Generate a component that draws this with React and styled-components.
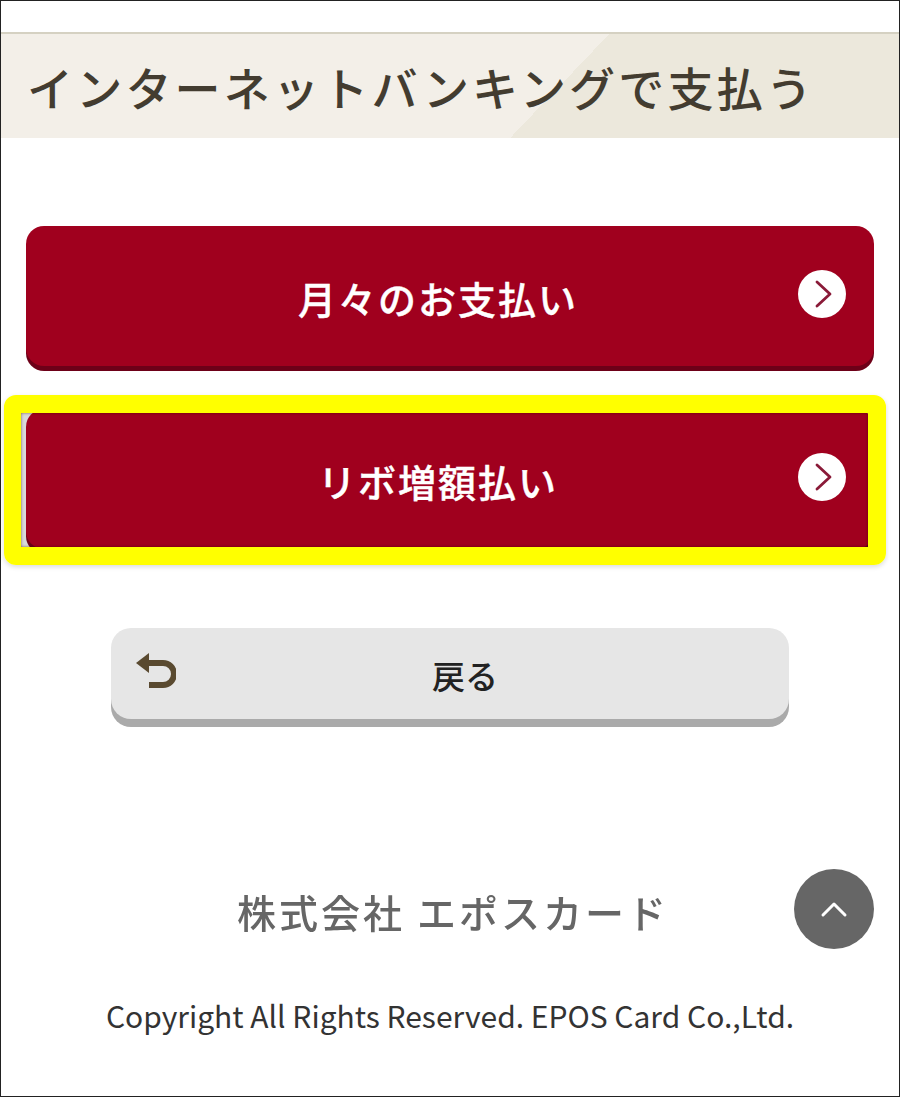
import React from "react";
import styled, { createGlobalStyle } from "styled-components";

const GlobalStyle = createGlobalStyle`
  html, body {
    margin: 0;
    padding: 0;
    background: #fff;
  }
  * {
    box-sizing: border-box;
  }
`;

function ChevronCircle() {
  return (
    <Circle>
      <svg width="24" height="30" viewBox="0 0 24 30" fill="none">
        <path d="M7 3 L20 15 L7 27" stroke="#8a1a38" strokeWidth="2.8" strokeLinecap="round" strokeLinejoin="round" />
      </svg>
    </Circle>
  );
}

function App() {
  return (
    <Frame>
      <GlobalStyle />
      <Header>
        <Title>インターネットバンキングで支払う</Title>
      </Header>
      <Main>
        <PayButton>
          <PayLabel>月々のお支払い</PayLabel>
          <ChevronCircle />
        </PayButton>
        <HighlightRow>
          <PayButton>
            <PayLabel>リボ増額払い</PayLabel>
            <ChevronCircle />
          </PayButton>
          <Highlight />
        </HighlightRow>
        <BackButton>
          <svg width="40" height="38" viewBox="0 0 40 38" fill="none">
            <path d="M0 11 L13 1 L13 21 Z" fill="#5a4a30" />
            <path d="M10 11 H27 A 11 11 0 0 1 27 33 H13" stroke="#5a4a30" strokeWidth="6" />
          </svg>
          <BackLabel>戻る</BackLabel>
        </BackButton>
      </Main>
      <Footer>
        <CompanyName>株式会社 エポスカード</CompanyName>
        <Copyright>Copyright All Rights Reserved. EPOS Card Co.,Ltd.</Copyright>
      </Footer>
      <ScrollTop>
        <svg width="30" height="20" viewBox="0 0 30 20" fill="none">
          <path d="M4 16 L15 5 L26 16" stroke="#fff" strokeWidth="3" strokeLinecap="round" strokeLinejoin="round" />
        </svg>
      </ScrollTop>
    </Frame>
  );
}

export default App;

const Frame = styled.div`
  position: relative;
  width: 900px;
  height: 1097px;
  border: 1px solid #222;
  background: #fff;
  overflow: hidden;
  font-family: "Noto Sans CJK JP", "Noto Sans", sans-serif;
`;

const Header = styled.header`
  margin-top: 31px;
  height: 106px;
  padding-left: 26px;
  display: flex;
  align-items: center;
  border-top: 2px solid #d5d1c2;
  background: linear-gradient(133.6deg, #f3efe8 61%, #ece8dc 61%);
`;

const Title = styled.h1`
  margin: 0;
  font-size: 46px;
  font-weight: 500;
  letter-spacing: 3.2px;
  line-height: 1;
  color: #433c30;
  white-space: nowrap;
`;

const Main = styled.main`
  padding: 88px 25px 0;
  display: flex;
  flex-direction: column;
  align-items: center;
`;

const PayButton = styled.button`
  position: relative;
  width: 848px;
  height: 140px;
  padding: 2px 24px 0 0;
  display: flex;
  align-items: center;
  justify-content: center;
  border: none;
  border-radius: 18px;
  background: #a0001e;
  box-shadow: 0 5px 0 #6d0018;
  font-family: inherit;
`;

const PayLabel = styled.span`
  font-size: 38px;
  font-weight: 500;
  letter-spacing: 2px;
  color: #fff;
  -webkit-text-stroke: 0.4px #fff;
`;

const Circle = styled.span`
  position: absolute;
  right: 28px;
  top: 44px;
  width: 48px;
  height: 48px;
  display: flex;
  align-items: center;
  justify-content: center;
  border-radius: 50%;
  background: #fff;
`;

const HighlightRow = styled.div`
  position: relative;
  margin-top: 43px;

  &::before {
    content: "";
    position: absolute;
    left: -5px;
    top: 4px;
    width: 12px;
    height: 135px;
    background: #d9d9d9;
  }
`;

const Highlight = styled.div`
  position: absolute;
  left: -22px;
  top: -14px;
  width: 882px;
  height: 170px;
  border: solid #ffff00;
  border-width: 18px 18px 18px 17px;
  border-radius: 12px;
  box-shadow:
    0 2px 5px rgba(0, 0, 0, 0.14),
    inset 0 0 3px rgba(60, 0, 0, 0.6);
`;

const BackButton = styled.button`
  position: relative;
  margin-top: 79px;
  width: 678px;
  height: 91px;
  padding: 2px 0 0 0;
  display: flex;
  align-items: center;
  justify-content: center;
  border: none;
  border-radius: 20px;
  background: #e6e6e6;
  box-shadow: 0 8px 0 #aaaaaa;
  font-family: inherit;

  svg {
    position: absolute;
    left: 25px;
    top: 24px;
  }
`;

const BackLabel = styled.span`
  margin-left: 30px;
  font-size: 33px;
  font-weight: 500;
  color: #222;
`;

const Footer = styled.footer`
  margin-top: 166px;
  display: flex;
  flex-direction: column;
  align-items: center;
`;

const CompanyName = styled.div`
  margin-left: 6px;
  font-size: 39px;
  font-weight: 500;
  letter-spacing: 3px;
  line-height: 52px;
  color: #666;
  filter: blur(0.5px);
`;

const Copyright = styled.div`
  margin-top: 58px;
  font-size: 30px;
  line-height: 40px;
  color: #333;
  white-space: nowrap;
`;

const ScrollTop = styled.button`
  position: absolute;
  left: 793px;
  top: 868px;
  width: 80px;
  height: 80px;
  padding: 0;
  display: flex;
  align-items: center;
  justify-content: center;
  border: none;
  border-radius: 50%;
  background: #666;
`;
